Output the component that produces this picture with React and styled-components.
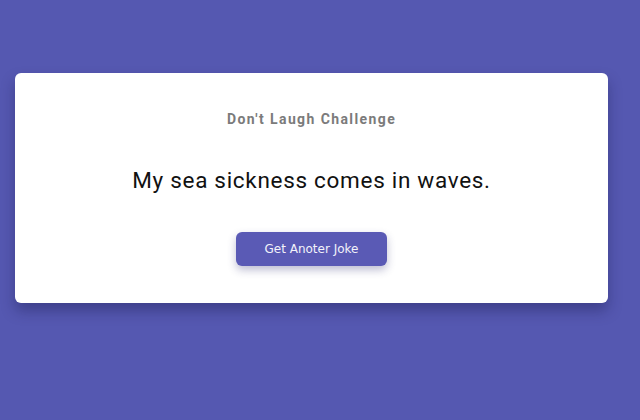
import { useState } from 'react';
import { styled, createGlobalStyle } from 'styled-components';

const jokes = [
  'My sea sickness comes in waves.',
  'I used to hate facial hair, but then it grew on me.',
  'I only know 25 letters of the alphabet. I don\'t know y.',
];

const GlobalStyle = createGlobalStyle`
  html, body {
    margin: 0;
    height: 100%;
    background: #5558b1;
  }
  #root {
    min-height: 100%;
  }
`

const Page = styled.main`
  box-sizing: border-box;
  width: 623px;
  min-height: 420px;
  padding: 73px 15px 0;
`

const Card = styled.section`
  display: flex;
  flex-direction: column;
  align-items: center;
  height: 230px;
  box-sizing: border-box;
  padding-top: 36px;
  background: #fff;
  border-radius: 6px;
  box-shadow: 0 8px 14px rgba(20, 20, 70, 0.35);
`

const Title = styled.h3`
  margin: 0;
  font-family: Roboto, "Liberation Sans", sans-serif;
  font-size: 14px;
  font-weight: 700;
  letter-spacing: 1.4px;
  line-height: 20px;
  color: #7b7b7b;
`

const Joke = styled.p`
  margin: 38px 0 0;
  font-family: Roboto, "Liberation Sans", sans-serif;
  font-size: 22.5px;
  font-weight: 400;
  letter-spacing: 0.7px;
  line-height: 26px;
  color: #111;
`

const Button = styled.button`
  margin-top: 39px;
  width: 151px;
  height: 34px;
  border: none;
  border-radius: 6px;
  background: #5a5ab5;
  color: #f2f2fa;
  font-family: "DejaVu Sans", sans-serif;
  font-size: 12px;
  box-shadow: 0 4px 8px rgba(40, 40, 110, 0.3);
  cursor: pointer;

  &:hover {
    background: #4c4ca6;
  }
`

export default function App() {
  const [index, setIndex] = useState(0);

  return (
    <>
      <GlobalStyle />
      <Page>
        <Card>
          <Title>Don't Laugh Challenge</Title>
          <Joke>{jokes[index]}</Joke>
          <Button onClick={() => setIndex((index + 1) % jokes.length)}>
            Get Anoter Joke
          </Button>
        </Card>
      </Page>
    </>
  );
}
